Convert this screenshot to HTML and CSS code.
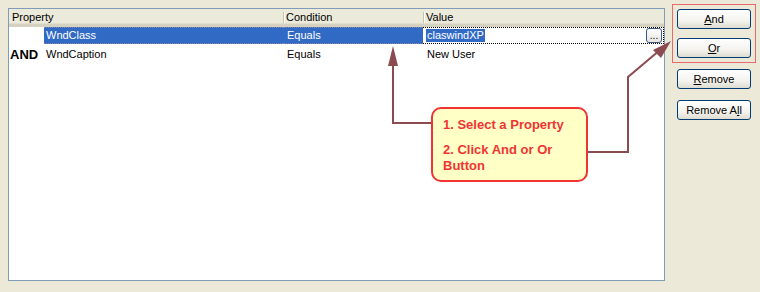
FILE: index.html
```html
<!DOCTYPE html>
<html lang="en">
<head>
    <meta charset="UTF-8">
    <title>Conditions</title>
    <link rel="stylesheet" href="styles.css">
</head>
<body>
    <div class="window">
        <div class="grid">
            <div class="header">
                <div class="col col-property">Property</div>
                <div class="col col-condition">Condition</div>
                <div class="col col-value">Value</div>
            </div>
            <div class="row selected">
                <div class="cell label"></div>
                <div class="cell prop">WndClass</div>
                <div class="cell cond">Equals</div>
                <div class="cell value editing">
                    <span class="sel-text">claswindXP</span>
                    <button class="ellipsis">...</button>
                </div>
            </div>
            <div class="row">
                <div class="cell label">AND</div>
                <div class="cell prop">WndCaption</div>
                <div class="cell cond">Equals</div>
                <div class="cell value">New User</div>
            </div>
        </div>

        <div class="actions">
            <div class="highlight">
                <button class="xp-btn"><u>A</u>nd</button>
                <button class="xp-btn"><u>O</u>r</button>
            </div>
            <button class="xp-btn remove"><u>R</u>emove</button>
            <button class="xp-btn remove-all">Remove A<u>l</u>l</button>
        </div>

        <!-- annotation arrows -->
        <svg class="arrows" width="760" height="292" viewBox="0 0 760 292">
            <polyline points="431,123 393,123 393,60" fill="none" stroke="#8c4b50" stroke-width="2"/>
            <polygon points="393,46 388,66 398,66" fill="#8c4b50"/>
            <polyline points="562,152 628,152 628,77 660,50" fill="none" stroke="#8c4b50" stroke-width="2"/>
            <polygon points="671,41 653,50 661,58" fill="#8c4b50"/>
        </svg>

        <div class="callout">
            <p>1. Select a Property</p>
            <p>2. Click And or Or<br>Button</p>
        </div>
    </div>
</body>
</html>
```

FILE: styles.css
```css
:root {
    --face: #ece9d8;
    --border: #7f9db9;
    --select: #316ac5;
    --arrow: #8c4b50;
    --note: #f03434;
}

* {
    margin: 0;
    padding: 0;
    box-sizing: border-box;
}

body {
    background: var(--face);
    font-family: 'Liberation Sans', Arial, sans-serif;
    font-size: 11px;
    color: #000;
}

.window {
    position: relative;
    width: 760px;
    height: 292px;
    display: flex;
    align-items: flex-start;
    padding: 8px 0 0 8px;
}

/* property grid */
.grid {
    width: 657px;
    height: 273px;
    border: 1px solid var(--border);
    background: white;
}

.header {
    display: flex;
    height: 18px;
    padding-top: 1px;
    background: #ebeadb;
    border-bottom: 3px solid #d6d2c2;
    box-shadow: inset 0 -1px 0 #e2decd;
}

.col {
    height: 14px;
    line-height: 14px;
    padding-left: 3px;
    position: relative;
}

.col-property { width: 274px; }
.col-condition { width: 140px; }
.col-value { flex: 1; }

.col-condition::before,
.col-value::before {
    content: "";
    position: absolute;
    left: 0;
    top: 2px;
    height: 11px;
    border-left: 1px solid #c7c5b2;
    border-right: 1px solid #fff;
}

.row {
    display: flex;
    height: 17px;
    line-height: 17px;
}

.row + .row {
    height: 19px;
    line-height: 21px;
}

.cell {
    white-space: nowrap;
    overflow: hidden;
}

.label {
    width: 35px;
    font-weight: bold;
    font-size: 13px;
    padding-left: 1px;
}

.prop {
    width: 239px;
    padding-left: 2px;
}

.cond {
    width: 140px;
    padding-left: 4px;
}

.value {
    flex: 1;
    padding-left: 4px;
}

.selected .prop,
.selected .cond {
    background: var(--select);
    color: white;
    border-top: 1px dotted #8a86a8;
    border-bottom: 1px dotted #8a86a8;
    line-height: 15px;
}

.editing {
    display: flex;
    align-items: center;
    padding-left: 3px;
    border-top: 1px dotted #000;
    border-bottom: 1px dotted #000;
    border-right: 1px dotted #000;
    line-height: 15px;
}

.sel-text {
    background: var(--select);
    color: white;
    padding: 0 1px;
    line-height: 13px;
}

.ellipsis {
    margin-left: auto;
    margin-right: 1px;
    width: 16px;
    height: 15px;
    border: 1px solid #3c5a88;
    border-radius: 3px;
    background: linear-gradient(#fff, #e6e4dc);
    font-family: 'Liberation Sans', Arial, sans-serif;
    font-size: 10px;
    line-height: 8px;
}

/* side buttons */
.actions {
    margin: -4px 0 0 7px;
    width: 84px;
    display: flex;
    flex-direction: column;
    align-items: flex-start;
}

.highlight {
    border: 1px solid #e86a6a;
    padding: 4px 5px 4px 4px;
    display: flex;
    flex-direction: column;
    gap: 9px;
    width: 84px;
}

.xp-btn {
    width: 74px;
    height: 20px;
    border: 1px solid #003c74;
    border-radius: 3px;
    background: linear-gradient(#ffffff 0%, #f4f3ee 60%, #dedcd0 100%);
    font-family: 'Liberation Sans', Arial, sans-serif;
    font-size: 11px;
    color: #000;
}

.remove {
    margin: 6px 0 0 5px;
}

.remove-all {
    margin: 11px 0 0 5px;
}

/* annotation overlay */
.arrows {
    position: absolute;
    left: 0;
    top: 0;
    pointer-events: none;
}

.callout {
    position: absolute;
    left: 431px;
    top: 107px;
    width: 157px;
    height: 75px;
    border: 2px solid var(--note);
    border-radius: 10px;
    background: #ffffc6;
    padding: 8px 0 0 10px;
    color: var(--note);
    font-weight: bold;
    font-size: 13px;
    line-height: 16px;
}

.callout p + p {
    margin-top: 9px;
}
```
